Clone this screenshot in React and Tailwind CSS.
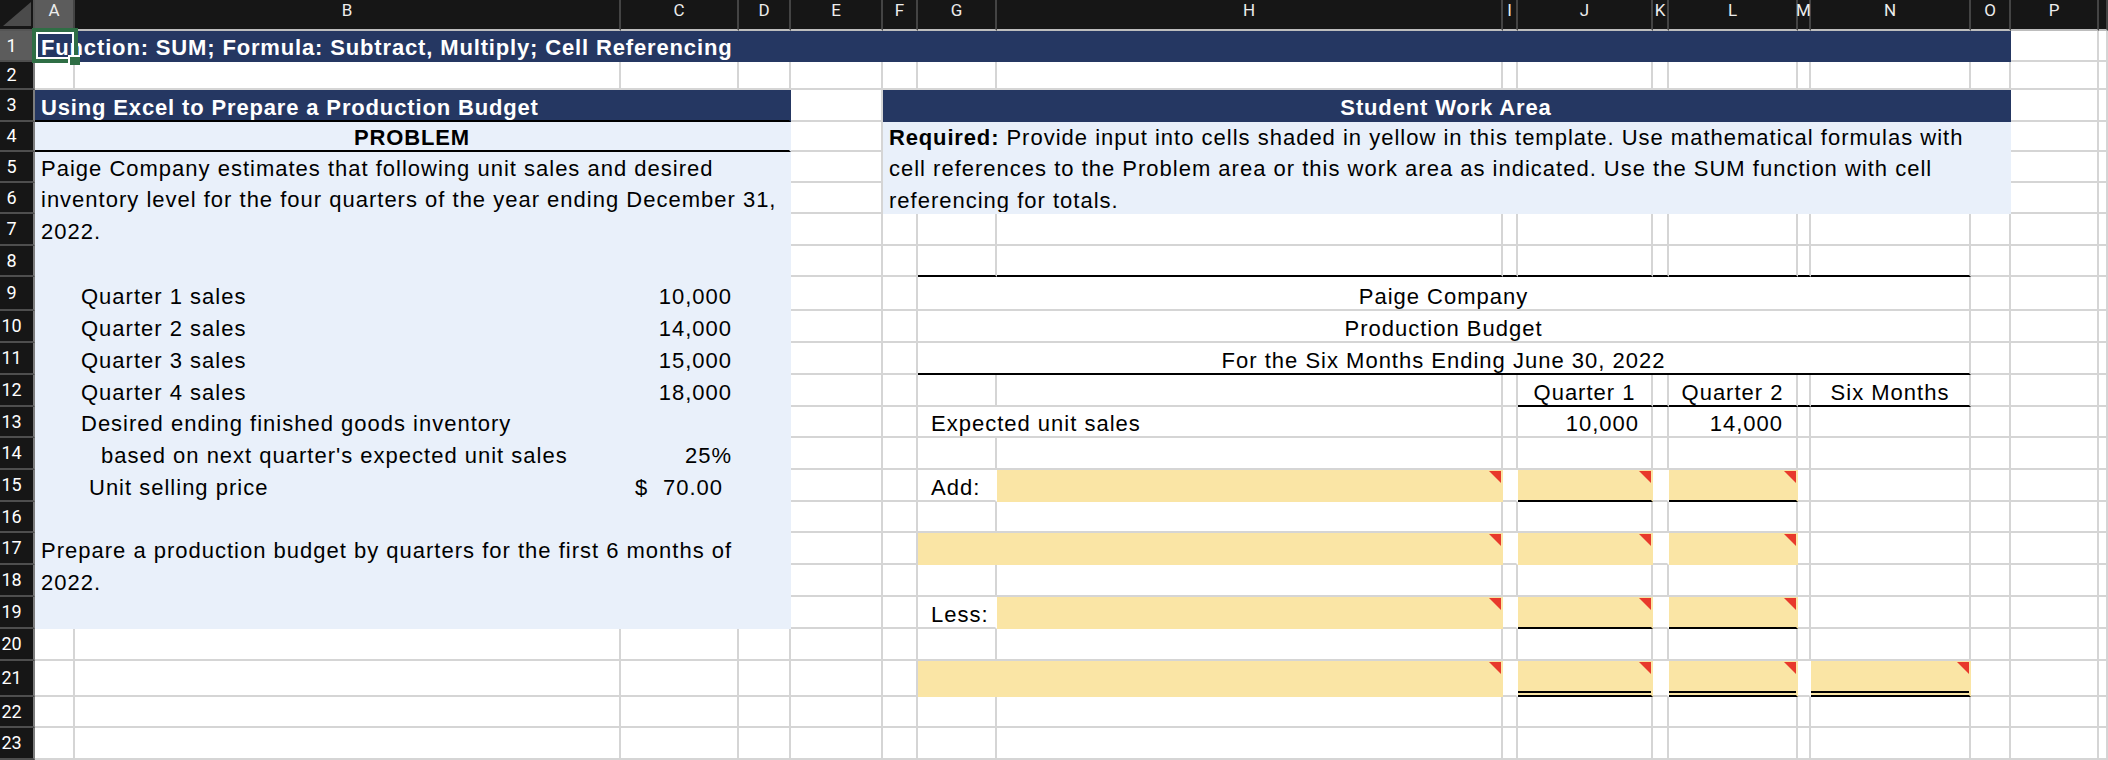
import React from "react";
import clsx from "clsx";

const COLS =
  "grid grid-cols-[35px_40px_546px_118px_52px_92px_35px_79px_506px_15px_135px_16px_129px_13px_160px_40px_88px_1fr]";
const HDR_FONT = "font-['Roboto',sans-serif] tracking-normal";

const FILL = {
  none: "bg-white",
  navy: "bg-[#253762]",
  blue: "bg-[#e9f0fa]",
  yellow: "bg-[#fae5a5]",
};
const RB = {
  none: "border-r-[#d5d5d5]",
  navy: "border-r-[#253762]",
  blue: "border-r-[#e9f0fa]",
  yellow: "border-r-[#fae5a5]",
};
const BB = {
  none: "border-b-[#d5d5d5]",
  navy: "border-b-[#253762]",
  blue: "border-b-[#e9f0fa]",
  yellow: "border-b-[#fae5a5]",
};

const LETTERS = ["A", "B", "C", "D", "E", "F", "G", "H", "I", "J", "K", "L", "M", "N", "O", "P", ""];

const Cell = ({ fill = "none", span, black, clearRight, tri, dbl, className, children }) => {
  return (
    <div
      className={clsx(
        "relative flex min-w-0 items-end overflow-hidden whitespace-nowrap border-r-2 border-b-2 pb-[1px]",
        FILL[fill],
        clearRight ? "border-r-white" : RB[fill],
        black ? "border-b-black" : BB[fill],
        span,
        className
      )}
    >
      {children}
      {tri && (
        <span className="absolute top-[1px] right-0 h-0 w-0 border-t-[12px] border-l-[12px] border-t-[#e8392b] border-l-transparent" />
      )}
      {dbl && <span className="absolute right-0 bottom-[2px] left-0 h-[2px] bg-black" />}
    </div>
  );
};

const blanks = (k, n) => Array.from({ length: n }, (_, i) => <Cell key={`${k}-${i}`} />);

const RowHead = ({ n, sel }) => (
  <div
    className={clsx(
      "flex items-center border-r-2 border-b-2 border-r-[#7d7d7d] border-b-[#4e4e4e] text-[18px] text-white",
      HDR_FONT,
      sel ? "bg-[#5c5c5c]" : "bg-[#161616]"
    )}
  >
    <span className="w-[23px] text-center">{n}</span>
  </div>
);

const Row = ({ n, h, sel, children }) => (
  <div className={clsx(COLS, h)}>
    <RowHead n={n} sel={sel} />
    {children}
  </div>
);

const ColHeads = () => (
  <div className={clsx(COLS, "h-[31px]", HDR_FONT)}>
    <div className="relative border-r-2 border-b-2 border-r-[#555] border-b-[#555] bg-[#161616]">
      <svg width="33" height="29" className="absolute top-0 left-0">
        <polygon points="3,26 31,26 31,2" fill="#4b4b4b" />
      </svg>
    </div>
    {LETTERS.map((l, i) => (
      <div
        key={i}
        className={clsx(
          "flex justify-center border-r-2 border-b-2 border-r-[#444] border-b-[#bdbdbd] pt-[2px] text-[17px] leading-[17px] text-[#ececec]",
          i === 0 ? "bg-[#5c5c5c]" : "bg-[#161616]"
        )}
      >
        {l}
      </div>
    ))}
  </div>
);

const LeftText = ({ children, className }) => (
  <Cell span="col-span-4" fill="blue" className={clsx("pl-[6px]", className)}>
    {children}
  </Cell>
);

const App = () => {
  return (
    <div className="relative h-[760px] w-[2108px] overflow-hidden bg-white font-['Liberation_Sans',Arial,sans-serif] text-[22px] leading-[22px] tracking-[1px] text-black">
      <ColHeads />

      <Row n={1} h="h-[31px]" sel>
        <Cell span="col-span-15" fill="navy" className="pl-[6px] font-bold tracking-[0.85px] text-white">
          Function: SUM; Formula: Subtract, Multiply; Cell Referencing
        </Cell>
        {blanks("r1", 2)}
      </Row>

      <Row n={2} h="h-[28px]">{blanks("r2", 17)}</Row>

      <Row n={3} h="h-[32px]">
        <Cell span="col-span-4" fill="navy" black className="pl-[6px] font-bold tracking-[0.85px] text-white">
          Using Excel to Prepare a Production Budget
        </Cell>
        <Cell />
        <Cell span="col-span-10" fill="navy" className="justify-center font-bold tracking-[0.85px] text-white">
          Student Work Area
        </Cell>
        {blanks("r3", 2)}
      </Row>

      <Row n={4} h="h-[30px]">
        <Cell span="col-span-4" fill="blue" black className="justify-center font-bold tracking-[0.85px]">
          PROBLEM
        </Cell>
        <Cell />
        <Cell span="col-span-10" fill="blue" className="pl-[6px]">
          <span>
            <b className="tracking-[0.85px]">Required:</b> Provide input into cells shaded in yellow in this
            template. Use mathematical formulas with
          </span>
        </Cell>
        {blanks("r4", 2)}
      </Row>

      <Row n={5} h="h-[31px]">
        <LeftText>Paige Company estimates that following unit sales and desired</LeftText>
        <Cell />
        <Cell span="col-span-10" fill="blue" className="pl-[6px]">
          cell references to the Problem area or this work area as indicated. Use the SUM function with cell
        </Cell>
        {blanks("r5", 2)}
      </Row>

      <Row n={6} h="h-[31px]">
        <LeftText>inventory level for the four quarters of the year ending December 31,</LeftText>
        <Cell />
        <Cell span="col-span-10" fill="blue" className="pl-[6px]">
          <span className="relative top-[1px]">referencing for totals.</span>
        </Cell>
        {blanks("r6", 2)}
      </Row>

      <Row n={7} h="h-[32px]">
        <LeftText>2022.</LeftText>
        {blanks("r7", 13)}
      </Row>

      <Row n={8} h="h-[31px]">
        <LeftText />
        {blanks("r8a", 2)}
        {Array.from({ length: 8 }, (_, i) => (
          <Cell key={`r8b-${i}`} black />
        ))}
        {blanks("r8c", 3)}
      </Row>

      {[
        [9, "h-[34px]", "Quarter 1 sales", "10,000", "Paige Company", false],
        [10, "h-[32px]", "Quarter 2 sales", "14,000", "Production Budget", false],
        [11, "h-[32px]", "Quarter 3 sales", "15,000", "For the Six Months Ending June 30, 2022", true],
      ].map(([n, h, label, val, title, line]) => (
        <Row key={n} n={n} h={h}>
          <Cell fill="blue" />
          <Cell fill="blue" className="pl-[6px]">
            {label}
          </Cell>
          <Cell fill="blue" className="justify-end pr-[5px]">
            {val}
          </Cell>
          <Cell fill="blue" />
          {blanks(`r${n}a`, 2)}
          <Cell span="col-span-8" black={line} className="justify-center">
            {title}
          </Cell>
          {blanks(`r${n}b`, 3)}
        </Row>
      ))}

      <Row n={12} h="h-[32px]">
        <Cell fill="blue" />
        <Cell fill="blue" className="pl-[6px]">
          Quarter 4 sales
        </Cell>
        <Cell fill="blue" className="justify-end pr-[5px]">
          18,000
        </Cell>
        <Cell fill="blue" />
        {blanks("r12a", 5)}
        <Cell black className="justify-center">
          Quarter 1
        </Cell>
        <Cell black />
        <Cell black className="justify-center">
          Quarter 2
        </Cell>
        <Cell black />
        <Cell black className="justify-center">
          Six Months
        </Cell>
        {blanks("r12b", 3)}
      </Row>

      <Row n={13} h="h-[31px]">
        <Cell fill="blue" />
        <Cell fill="blue" className="pl-[6px]">
          Desired ending finished goods inventory
        </Cell>
        <Cell fill="blue" />
        <Cell fill="blue" />
        {blanks("r13a", 2)}
        <Cell span="col-span-2" className="pl-[13px]">
          Expected unit sales
        </Cell>
        <Cell />
        <Cell className="justify-end pr-[12px]">10,000</Cell>
        <Cell />
        <Cell className="justify-end pr-[13px]">14,000</Cell>
        {blanks("r13b", 5)}
      </Row>

      <Row n={14} h="h-[32px]">
        <Cell fill="blue" />
        <Cell fill="blue" className="pl-[26px]">
          based on next quarter's expected unit sales
        </Cell>
        <Cell fill="blue" className="justify-end pr-[5px]">
          25%
        </Cell>
        <Cell fill="blue" />
        {blanks("r14", 13)}
      </Row>

      <Row n={15} h="h-[32px]">
        <Cell fill="blue" />
        <Cell fill="blue" className="pl-[14px]">
          Unit selling price
        </Cell>
        <Cell fill="blue" className="justify-between px-[14px]">
          <span>$</span>
          <span>70.00</span>
        </Cell>
        <Cell fill="blue" />
        {blanks("r15a", 2)}
        <Cell clearRight className="pl-[13px]">
          Add:
        </Cell>
        <Cell fill="yellow" tri />
        <Cell clearRight />
        <Cell fill="yellow" black tri />
        <Cell clearRight />
        <Cell fill="yellow" black tri />
        {blanks("r15b", 5)}
      </Row>

      <Row n={16} h="h-[31px]">
        <LeftText />
        {blanks("r16", 13)}
      </Row>

      <Row n={17} h="h-[32px]">
        <LeftText>Prepare a production budget by quarters for the first 6 months of</LeftText>
        {blanks("r17a", 2)}
        <Cell span="col-span-2" fill="yellow" tri />
        <Cell clearRight />
        <Cell fill="yellow" tri />
        <Cell clearRight />
        <Cell fill="yellow" tri />
        {blanks("r17b", 5)}
      </Row>

      <Row n={18} h="h-[32px]">
        <LeftText>2022.</LeftText>
        {blanks("r18", 13)}
      </Row>

      <Row n={19} h="h-[32px]">
        <LeftText />
        {blanks("r19a", 2)}
        <Cell clearRight className="pl-[13px]">
          Less:
        </Cell>
        <Cell fill="yellow" tri />
        <Cell clearRight />
        <Cell fill="yellow" black tri />
        <Cell clearRight />
        <Cell fill="yellow" black tri />
        {blanks("r19b", 5)}
      </Row>

      <Row n={20} h="h-[32px]">{blanks("r20", 17)}</Row>

      <Row n={21} h="h-[36px]">
        {blanks("r21a", 6)}
        <Cell span="col-span-2" fill="yellow" tri />
        <Cell clearRight />
        <Cell fill="yellow" black tri dbl />
        <Cell clearRight />
        <Cell fill="yellow" black tri dbl />
        <Cell clearRight />
        <Cell fill="yellow" black tri dbl />
        {blanks("r21b", 3)}
      </Row>

      <Row n={22} h="h-[31px]">{blanks("r22", 17)}</Row>
      <Row n={23} h="h-[32px]">{blanks("r23", 17)}</Row>

      {/* active cell A1 */}
      <div className="pointer-events-none absolute top-[28px] left-[32px] h-[35px] w-[46px] border-4 border-[#2f6e45]">
        <div className="h-full w-full border-2 border-white" />
      </div>
      <div className="pointer-events-none absolute top-[55px] left-[68px] h-[10px] w-[12px] border-t-2 border-l-2 border-white bg-[#2f6e45]" />
    </div>
  );
};

export default App;
